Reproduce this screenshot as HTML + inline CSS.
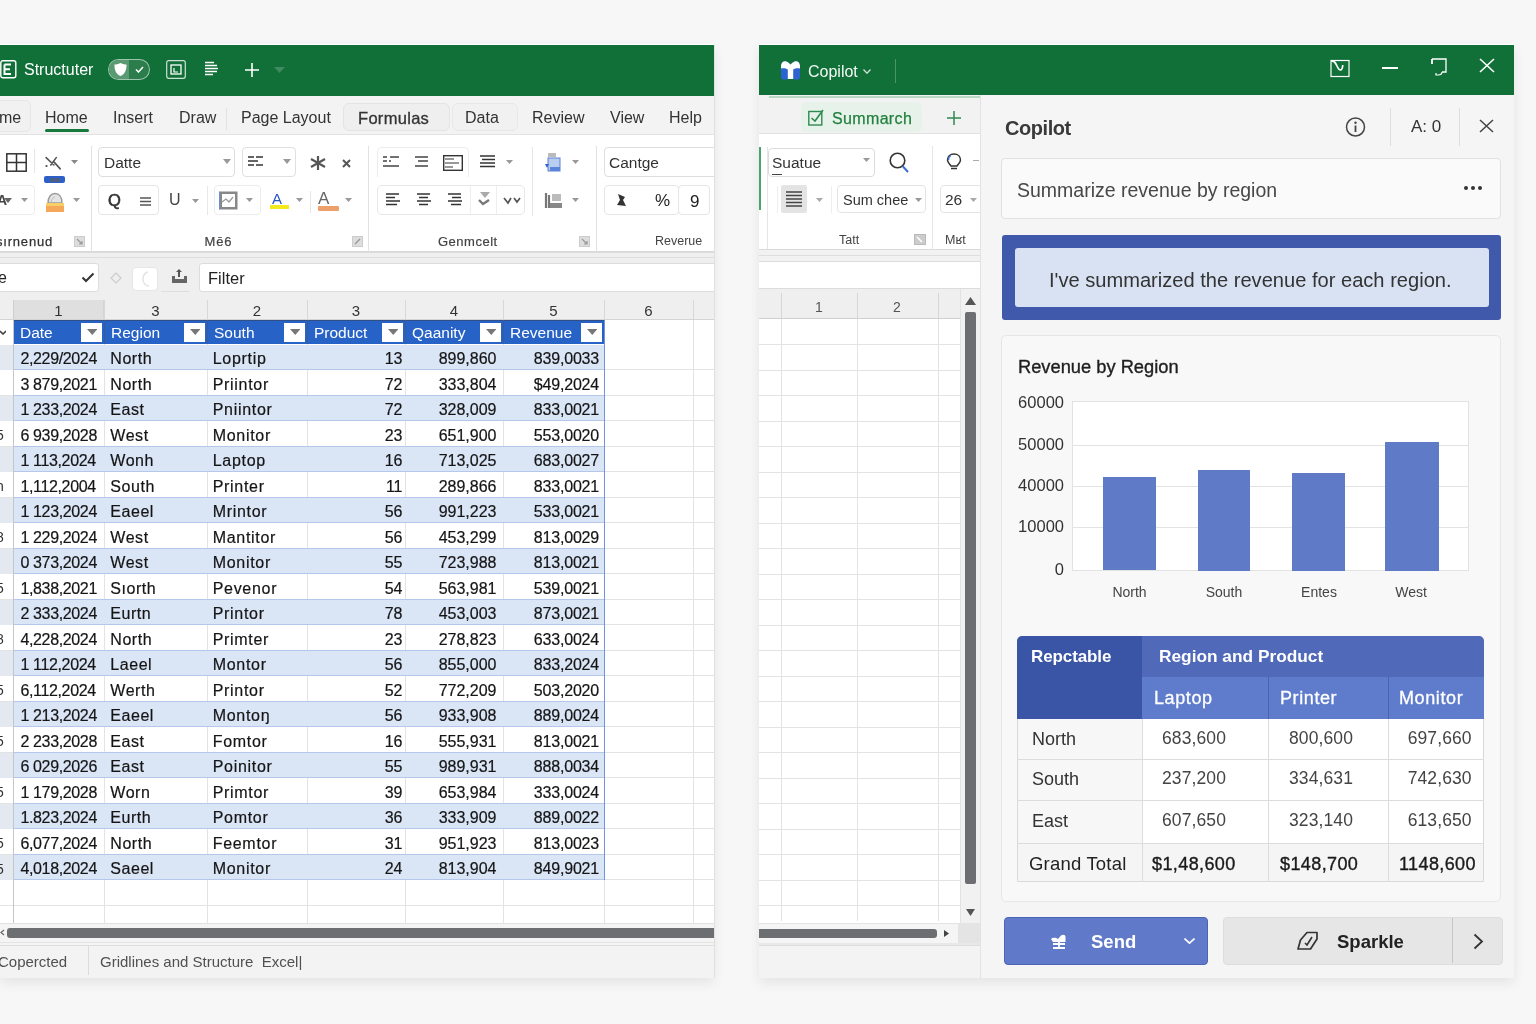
<!DOCTYPE html><html><head><meta charset="utf-8"><style>
*{box-sizing:border-box;margin:0;padding:0}
body{width:1536px;height:1024px;background:#f7f7f7;position:relative;overflow:hidden;font-family:"Liberation Sans",sans-serif;color:#222}
.a{position:absolute}
.t{position:absolute;white-space:nowrap;line-height:1}
</style></head><body><div class="a" style="left:0;top:0;width:1536px;height:1024px;will-change:transform">
<div class="a" style="left:0px;top:44px;width:714px;height:934px;background:#fff;box-shadow:0 5px 12px rgba(0,0,0,.08),1px 0 0 rgba(0,0,0,.06)"></div>
<div class="a" style="left:0;top:0;width:714px;height:1024px;overflow:hidden">
<div class="a" style="left:0px;top:45px;width:714px;height:51px;background:#116f38"></div>
<svg class="a" style="left:0px;top:60px;" width="17" height="19" viewBox="0 0 17 19"><rect x="0.8" y="0.8" width="15" height="17" rx="2" fill="none" stroke="#fff" stroke-width="1.4"/><path d="M4.5 4.5H11M4.5 4.5V14H11M4.5 9.2H10" stroke="#fff" stroke-width="2" fill="none"/></svg>
<div class="t" style="left:24px;top:62px;font-size:16px;color:#fff">Structuter</div>
<div class="a" style="left:108px;top:59px;width:42px;height:21px;border:1.3px solid rgba(255,255,255,.55);border-radius:11px;background:#2b7d4c"></div>
<div class="a" style="left:109px;top:60px;width:20px;height:19px;background:#5a9a72;border-radius:10px 0 0 10px"></div>
<svg class="a" style="left:113px;top:62px;" width="15" height="15" viewBox="0 0 15 15"><path d="M7.5 1C5 2.5 3 2.3 1.5 2.5C1.3 8 3 12 7.5 14C12 12 13.7 8 13.5 2.5C12 2.3 10 2.5 7.5 1Z" fill="#fff"/></svg>
<svg class="a" style="left:135px;top:66px;" width="9" height="7" viewBox="0 0 9 7"><path d="M1 3.5L3.5 6L8 1" fill="none" stroke="#fff" stroke-width="1.5"/></svg>
<svg class="a" style="left:166px;top:60px;" width="20" height="19" viewBox="0 0 20 19"><rect x="0.7" y="0.7" width="18.6" height="17.6" rx="2" fill="none" stroke="rgba(255,255,255,.8)" stroke-width="1.2"/><rect x="5" y="5" width="10" height="9" fill="none" stroke="#fff" stroke-width="1.3"/><path d="M8 8V12H12" fill="none" stroke="#fff" stroke-width="1.2"/></svg>
<svg class="a" style="left:204px;top:61px;" width="15" height="16" viewBox="0 0 15 16"><path d="M1 1.5H10M1 4.5H13M1 7.5H14M1 10.5H13M1 13.5H9" stroke="#fff" stroke-width="1.6"/></svg>
<svg class="a" style="left:245px;top:63px;" width="14" height="14" viewBox="0 0 14 14"><path d="M7 0V14M0 7H14" stroke="#fff" stroke-width="1.6"/></svg>
<svg class="a" style="left:274.0px;top:66.5px" width="11" height="6" viewBox="0 0 11 6"><path d="M0 0H11L5.5 6Z" fill="#3f8a5e"/></svg>
<div class="a" style="left:0px;top:96px;width:714px;height:39px;background:#f3f3f3;border-bottom:1px solid #e2e2e2"></div>
<div class="a" style="left:-10px;top:100px;width:41px;height:32px;border:1px solid #e6e6e6;border-radius:6px;background:#f1f1f1"></div>
<div class="a" style="left:343px;top:103px;width:107px;height:28px;border:1px solid #e4e4e4;border-radius:6px;background:#efefef"></div>
<div class="a" style="left:452px;top:103px;width:66px;height:28px;border:1px solid #e8e8e8;border-radius:6px;background:#f1f1f1"></div>
<div class="t" style="left:-1px;top:110px;font-size:16px;color:#333">me</div>
<div class="t" style="left:45px;top:110px;font-size:16px;color:#333">Home</div>
<div class="t" style="left:113px;top:110px;font-size:16px;color:#333">Insert</div>
<div class="t" style="left:179px;top:110px;font-size:16px;color:#333">Draw</div>
<div class="t" style="left:241px;top:110px;font-size:16px;color:#333">Page Layout</div>
<div class="t" style="left:358px;top:110px;font-size:16.5px;color:#333;-webkit-text-stroke:0.3px #333;letter-spacing:0.3px">Formulas</div>
<div class="t" style="left:465px;top:110px;font-size:16px;color:#333">Data</div>
<div class="t" style="left:532px;top:110px;font-size:16px;color:#333">Review</div>
<div class="t" style="left:610px;top:110px;font-size:16px;color:#333">View</div>
<div class="t" style="left:669px;top:110px;font-size:16px;color:#333">Help</div>
<div class="a" style="left:45px;top:129px;width:44px;height:3px;background:#177a3c;border-radius:2px"></div>
<div class="a" style="left:226px;top:108px;width:1px;height:22px;background:#e2e2e2"></div>
<div class="a" style="left:0px;top:135px;width:714px;height:117px;background:#fff;border-bottom:1px solid #d9d9d9"></div>
<div class="a" style="left:91px;top:146px;width:1px;height:106px;background:#e2e2e2"></div>
<div class="a" style="left:368px;top:146px;width:1px;height:106px;background:#e2e2e2"></div>
<div class="a" style="left:596px;top:146px;width:1px;height:106px;background:#e2e2e2"></div>
<svg class="a" style="left:6px;top:153px;" width="21" height="19" viewBox="0 0 21 19"><rect x="0.8" y="0.8" width="19.4" height="17.4" fill="none" stroke="#333" stroke-width="1.5"/><path d="M10.5 1V18M1 9.5H20" stroke="#333" stroke-width="1.5"/></svg>
<div class="a" style="left:34px;top:149px;width:1px;height:24px;background:#e6e6e6"></div>
<svg class="a" style="left:44px;top:156px;" width="18" height="15" viewBox="0 0 18 15"><path d="M2.1 1.6L9.9 9M6.8 9L12.25 1.6M9.9 5.9L16.2 12.9" fill="none" stroke="#555" stroke-width="1.6" stroke-linecap="round"/><circle cx="2.5" cy="10" r="1.1" fill="#444"/></svg>
<svg class="a" style="left:71.0px;top:160.0px" width="7" height="4" viewBox="0 0 7 4"><path d="M0 0H7L3.5 4Z" fill="#888"/></svg>
<div class="a" style="left:44px;top:176px;width:20.5px;height:7px;background:#2d5fc8;border-radius:2px"></div>
<div class="a" style="left:50px;top:177.5px;width:10px;height:4px;background:#4a5f86"></div>
<div class="a" style="left:-5px;top:185px;width:40px;height:30px;border:1px solid #ececec;border-radius:4px;background:#fff"></div>
<div class="t" style="left:-3px;top:193px;font-size:14px;color:#444;font-weight:bold">A</div>
<svg class="a" style="left:4.0px;top:197.5px" width="8" height="5" viewBox="0 0 8 5"><path d="M0 0H8L4.0 5Z" fill="#666"/></svg>
<svg class="a" style="left:21.0px;top:198.0px" width="7" height="4" viewBox="0 0 7 4"><path d="M0 0H7L3.5 4Z" fill="#999"/></svg>
<svg class="a" style="left:45px;top:192px;" width="20" height="21" viewBox="0 0 20 21"><path d="M3 11C3 5 6 1.5 10 1.5C14 1.5 17 5 17 11Z" fill="#e4e4e4" stroke="#9a9a9a" stroke-width="1.4"/><path d="M6 10C7 6.5 8.5 5 10 5" stroke="#bbb" fill="none"/><rect x="1" y="11" width="18" height="9" fill="#f5a85a"/><rect x="1" y="11" width="18" height="3" fill="#f6cf66"/></svg>
<svg class="a" style="left:73.0px;top:198.0px" width="7" height="4" viewBox="0 0 7 4"><path d="M0 0H7L3.5 4Z" fill="#999"/></svg>
<div class="a" style="left:98px;top:147px;width:137px;height:30px;border:1px solid #dedede;border-radius:4px;background:#fff"></div>
<div class="t" style="left:104px;top:155px;font-size:15.5px;color:#333">Datte</div>
<svg class="a" style="left:223.0px;top:158.5px" width="8" height="5" viewBox="0 0 8 5"><path d="M0 0H8L4.0 5Z" fill="#999"/></svg>
<div class="a" style="left:242px;top:147px;width:54px;height:30px;border:1px solid #e0e0e0;border-radius:4px;background:#fff"></div>
<svg class="a" style="left:248px;top:156px;" width="16" height="12" viewBox="0 0 16 12"><path d="M0 1H6M8 1H15M0 5H10M0 9H6M8 9H15" stroke="#333" stroke-width="1.4"/></svg>
<svg class="a" style="left:283.0px;top:158.5px" width="8" height="5" viewBox="0 0 8 5"><path d="M0 0H8L4.0 5Z" fill="#999"/></svg>
<svg class="a" style="left:309px;top:155px;" width="18" height="16" viewBox="0 0 18 16"><path d="M9 1V15M2 4L16 12M2 12L16 4" stroke="#555" stroke-width="2.2"/></svg>
<svg class="a" style="left:342px;top:159px;" width="9" height="9" viewBox="0 0 9 9"><path d="M1 1L8 8M8 1L1 8" stroke="#555" stroke-width="2"/></svg>
<div class="a" style="left:98px;top:185px;width:61px;height:30px;border:1px solid #e6e6e6;border-radius:4px;background:#fff"></div>
<div class="t" style="left:108px;top:192px;font-size:16.5px;color:#333;-webkit-text-stroke:0.6px #333">Q</div>
<svg class="a" style="left:140px;top:197px;" width="12" height="9" viewBox="0 0 12 9"><path d="M0 1H11M0 4.5H11M0 8H11" stroke="#555" stroke-width="1.3"/></svg>
<div class="t" style="left:169px;top:192px;font-size:16px;color:#444">U</div>
<svg class="a" style="left:191.5px;top:199.0px" width="7" height="4" viewBox="0 0 7 4"><path d="M0 0H7L3.5 4Z" fill="#999"/></svg>
<div class="a" style="left:207px;top:186px;width:1px;height:29px;background:#e8e8e8"></div>
<div class="a" style="left:214px;top:185px;width:47px;height:30px;border:1px solid #ececec;border-radius:4px;background:#fff"></div>
<svg class="a" style="left:219px;top:191px;" width="19" height="19" viewBox="0 0 19 19"><rect x="0.5" y="0.5" width="18" height="18" fill="#888"/><rect x="3" y="3" width="13" height="13" fill="#fff"/><path d="M3 11L7 8L10 11L14 6" stroke="#999" fill="none" stroke-width="1.3"/><path d="M0.5 0.5V18.5" stroke="#6b8fd8" stroke-width="1"/></svg>
<svg class="a" style="left:246.0px;top:198.0px" width="7" height="4" viewBox="0 0 7 4"><path d="M0 0H7L3.5 4Z" fill="#999"/></svg>
<div class="t" style="left:272px;top:191px;font-size:15px;color:#2854c8">A</div>
<div class="a" style="left:270px;top:205px;width:19px;height:4px;background:#f2ea1e"></div>
<svg class="a" style="left:296.0px;top:198.0px" width="7" height="4" viewBox="0 0 7 4"><path d="M0 0H7L3.5 4Z" fill="#999"/></svg>
<div class="a" style="left:310px;top:191px;width:1px;height:22px;background:#e6e6e6"></div>
<div class="t" style="left:318px;top:190px;font-size:17px;color:#666">A</div>
<div class="a" style="left:318px;top:206px;width:21px;height:5px;background:#eea06a;border-radius:1px"></div>
<svg class="a" style="left:345.0px;top:198.0px" width="7" height="4" viewBox="0 0 7 4"><path d="M0 0H7L3.5 4Z" fill="#999"/></svg>
<div class="a" style="left:377px;top:147px;width:92px;height:30px;border:1px solid #ececec;border-bottom:none;border-radius:5px 5px 0 0;background:#fff"></div>
<svg class="a" style="left:383px;top:156px;" width="17" height="11" viewBox="0 0 17 11"><path d="M0 1H4M7 1H16M0 5H4M6 5H8M0 10H16" stroke="#444" stroke-width="1.3"/></svg>
<svg class="a" style="left:415px;top:156px;" width="14" height="11" viewBox="0 0 14 11"><path d="M0 1H13M3 5H13M0 10H13" stroke="#444" stroke-width="1.3"/></svg>
<svg class="a" style="left:443px;top:155px;" width="20" height="16" viewBox="0 0 20 16"><rect x="0.7" y="0.7" width="18.6" height="14.6" fill="none" stroke="#333" stroke-width="1.4"/><path d="M2 4H11M2 8H16M2 12H10" stroke="#333" stroke-width="1.2"/></svg>
<svg class="a" style="left:479px;top:155px;" width="17" height="13" viewBox="0 0 17 13"><path d="M1 1H16M3 4.5H16M1 8H16M1 11.5H16" stroke="#333" stroke-width="1.6"/></svg>
<svg class="a" style="left:506.0px;top:160.0px" width="7" height="4" viewBox="0 0 7 4"><path d="M0 0H7L3.5 4Z" fill="#999"/></svg>
<div class="a" style="left:532px;top:147px;width:1px;height:69px;background:#e6e6e6"></div>
<svg class="a" style="left:544px;top:153px;" width="17" height="19" viewBox="0 0 17 19"><rect x="4" y="5" width="12" height="13" fill="#b9cdf0" stroke="#5a82d0"/><path d="M4 1H12M4 3H12" stroke="#777" stroke-width="1"/><path d="M1 11L5 11L3 15Z" fill="#2c63d8"/><rect x="6" y="14" width="10" height="4" fill="#5b85d8"/></svg>
<svg class="a" style="left:572.0px;top:160.0px" width="7" height="4" viewBox="0 0 7 4"><path d="M0 0H7L3.5 4Z" fill="#999"/></svg>
<div class="a" style="left:377px;top:185px;width:148px;height:30px;border:1px solid #e8e8e8;border-radius:5px;background:#fff"></div>
<div class="a" style="left:470px;top:186px;width:1px;height:28px;background:#eee"></div>
<div class="a" style="left:496px;top:186px;width:1px;height:28px;background:#eee"></div>
<svg class="a" style="left:385px;top:193px;" width="16" height="14" viewBox="0 0 16 14"><path d="M1 1H14M1 4.5H10M1 8H15M1 11.5H12" stroke="#333" stroke-width="1.5"/></svg>
<svg class="a" style="left:416px;top:193px;" width="16" height="14" viewBox="0 0 16 14"><path d="M1 1H14M3 4.5H12M1 8H15M3 11.5H12" stroke="#333" stroke-width="1.5"/></svg>
<svg class="a" style="left:447px;top:193px;" width="16" height="14" viewBox="0 0 16 14"><path d="M1 1H14M5 4.5H14M1 8H15M4 11.5H14" stroke="#333" stroke-width="1.5"/></svg>
<svg class="a" style="left:478px;top:191px;" width="14" height="17" viewBox="0 0 14 17"><path d="M2 1H12L7 7Z" fill="#aaa"/><path d="M1 9L5 13L11 9" fill="none" stroke="#777" stroke-width="2.4"/></svg>
<svg class="a" style="left:503px;top:196px;" width="18" height="9" viewBox="0 0 18 9"><path d="M1 2L5 7L8 2M11 2L14 6L17 2" fill="none" stroke="#555" stroke-width="1.7"/></svg>
<svg class="a" style="left:544px;top:192px;" width="19" height="17" viewBox="0 0 19 17"><path d="M2 1V16M5 3V16" stroke="#777" stroke-width="2.2"/><rect x="8" y="2" width="9" height="7" fill="#bbb"/><rect x="6" y="11" width="12" height="5" fill="#888"/></svg>
<svg class="a" style="left:572.0px;top:198.0px" width="7" height="4" viewBox="0 0 7 4"><path d="M0 0H7L3.5 4Z" fill="#999"/></svg>
<div class="a" style="left:604px;top:147px;width:115px;height:30px;border:1px solid #dedede;border-radius:4px;background:#fff"></div>
<div class="t" style="left:609px;top:155px;font-size:15.5px;color:#333">Cantge</div>
<div class="a" style="left:604px;top:185px;width:75px;height:30px;border:1px solid #e6e6e6;border-radius:4px;background:#fff"></div>
<div class="a" style="left:678px;top:185px;width:32px;height:30px;border:1px solid #e6e6e6;border-radius:4px;background:#fff"></div>
<svg class="a" style="left:615px;top:193px;" width="13" height="14" viewBox="0 0 13 14"><path d="M3 1L10 4L8 7L11 13L2 12L5 7Z" fill="#333"/></svg>
<div class="t" style="left:655px;top:192px;font-size:17px;color:#222">%</div>
<div class="t" style="left:690px;top:192.5px;font-size:17px;color:#222">9</div>
<div class="t" style="left:-4px;top:235px;font-size:13px;color:#333;letter-spacing:0.8px;-webkit-text-stroke:0.25px #333">sırnenud</div>
<svg class="a" style="left:74px;top:236px;" width="11" height="11" viewBox="0 0 11 11"><rect x="0.5" y="0.5" width="10" height="10" fill="#ddd" stroke="#ccc"/><path d="M3 3L8 8M8 5V8H5" stroke="#999" stroke-width="1.2" fill="none"/></svg>
<div class="t" style="left:204.5px;top:235px;font-size:13px;color:#444;letter-spacing:0.8px;-webkit-text-stroke:0.2px #444">Mē6</div>
<svg class="a" style="left:352px;top:236px;" width="11" height="11" viewBox="0 0 11 11"><rect x="0.5" y="0.5" width="10" height="10" fill="#ddd" stroke="#ccc"/><path d="M3 8L8 3" stroke="#999" stroke-width="1.5"/></svg>
<div class="t" style="left:438px;top:235px;font-size:13px;color:#444;letter-spacing:0.5px;-webkit-text-stroke:0.2px #444">Genmcelt</div>
<svg class="a" style="left:579px;top:236px;" width="11" height="11" viewBox="0 0 11 11"><rect x="0.5" y="0.5" width="10" height="10" fill="#ddd" stroke="#ccc"/><path d="M3 3L8 8M8 5V8H5" stroke="#999" stroke-width="1.2" fill="none"/></svg>
<div class="t" style="left:655px;top:235px;font-size:12.5px;color:#444">Reverue</div>
<div class="a" style="left:0px;top:252px;width:714px;height:46px;background:#efefef;border-top:1px solid #dcdcdc"></div>
<div class="a" style="left:0px;top:257px;width:714px;height:1px;background:#dedede"></div>
<div class="a" style="left:-4px;top:263px;width:103px;height:29px;background:#fff;border:1px solid #dcdcdc;border-radius:3px"></div>
<div class="t" style="left:-2px;top:270px;font-size:16px;color:#222">e</div>
<svg class="a" style="left:81px;top:272px;" width="14" height="11" viewBox="0 0 14 11"><path d="M1.5 5.5L5 9L12.5 1.5" fill="none" stroke="#333" stroke-width="2"/></svg>
<svg class="a" style="left:110px;top:272px;" width="12" height="12" viewBox="0 0 12 12"><path d="M6 1L11 6L6 11L1 6Z" fill="none" stroke="#ccc" stroke-width="1.2"/></svg>
<div class="a" style="left:132px;top:267px;width:26px;height:24px;background:#fff;border:1px solid #e6e6e6;border-radius:4px"></div>
<svg class="a" style="left:139px;top:271px;" width="12" height="16" viewBox="0 0 12 16"><path d="M9 1C4 2 3 8 5 12C6 14 8 15 10 15" fill="none" stroke="#e4e4e4" stroke-width="1.5"/></svg>
<svg class="a" style="left:171px;top:268px;" width="17" height="16" viewBox="0 0 17 16"><path d="M8 1L11 4H9V9H7V4H5Z" fill="#555"/><path d="M1 8H4V11H13V8H16V15H1Z" fill="#666"/></svg>
<div class="a" style="left:161px;top:291px;width:28px;height:1px;background:#dedede"></div>
<div class="a" style="left:199px;top:263px;width:520px;height:29px;background:#fff;border:1px solid #dcdcdc;border-radius:3px"></div>
<div class="t" style="left:208px;top:270px;font-size:16.5px;color:#222">Filter</div>
<div class="a" style="left:0px;top:298px;width:714px;height:22px;background:#efefef"></div>
<div class="a" style="left:13px;top:300px;width:91px;height:20px;background:#dfdfdf;border-left:1px solid #cfcfcf;border-right:1px solid #d4d4d4"></div>
<div class="a" style="left:104px;top:300px;width:1px;height:20px;background:#d8d8d8"></div>
<div class="t" style="left:13px;width:91px;text-align:center;top:303px;font-size:15px;color:#333">1</div>
<div class="a" style="left:207px;top:300px;width:1px;height:20px;background:#d8d8d8"></div>
<div class="t" style="left:104px;width:103px;text-align:center;top:303px;font-size:15px;color:#333">3</div>
<div class="a" style="left:307px;top:300px;width:1px;height:20px;background:#d8d8d8"></div>
<div class="t" style="left:207px;width:100px;text-align:center;top:303px;font-size:15px;color:#333">2</div>
<div class="a" style="left:405px;top:300px;width:1px;height:20px;background:#d8d8d8"></div>
<div class="t" style="left:307px;width:98px;text-align:center;top:303px;font-size:15px;color:#333">3</div>
<div class="a" style="left:503px;top:300px;width:1px;height:20px;background:#d8d8d8"></div>
<div class="t" style="left:405px;width:98px;text-align:center;top:303px;font-size:15px;color:#333">4</div>
<div class="a" style="left:604px;top:300px;width:1px;height:20px;background:#d8d8d8"></div>
<div class="t" style="left:503px;width:101px;text-align:center;top:303px;font-size:15px;color:#333">5</div>
<div class="a" style="left:693px;top:300px;width:1px;height:20px;background:#d8d8d8"></div>
<div class="t" style="left:604px;width:89px;text-align:center;top:303px;font-size:15px;color:#333">6</div>
<div class="a" style="left:714px;top:300px;width:1px;height:20px;background:#d8d8d8"></div>
<div class="t" style="left:693px;width:21px;text-align:center;top:303px;font-size:15px;color:#333"></div>
<div class="a" style="left:0px;top:319px;width:714px;height:1px;background:#d4d4d4"></div>
<div class="a" style="left:0px;top:320px;width:714px;height:603px;background:#fff"></div>
<div class="a" style="left:0px;top:369.0px;width:714px;height:1px;background:#e3e3e3"></div>
<div class="a" style="left:0px;top:394.5px;width:714px;height:1px;background:#e3e3e3"></div>
<div class="a" style="left:0px;top:420.0px;width:714px;height:1px;background:#e3e3e3"></div>
<div class="a" style="left:0px;top:445.5px;width:714px;height:1px;background:#e3e3e3"></div>
<div class="a" style="left:0px;top:471.0px;width:714px;height:1px;background:#e3e3e3"></div>
<div class="a" style="left:0px;top:496.5px;width:714px;height:1px;background:#e3e3e3"></div>
<div class="a" style="left:0px;top:522.0px;width:714px;height:1px;background:#e3e3e3"></div>
<div class="a" style="left:0px;top:547.5px;width:714px;height:1px;background:#e3e3e3"></div>
<div class="a" style="left:0px;top:573.0px;width:714px;height:1px;background:#e3e3e3"></div>
<div class="a" style="left:0px;top:598.5px;width:714px;height:1px;background:#e3e3e3"></div>
<div class="a" style="left:0px;top:624.0px;width:714px;height:1px;background:#e3e3e3"></div>
<div class="a" style="left:0px;top:649.5px;width:714px;height:1px;background:#e3e3e3"></div>
<div class="a" style="left:0px;top:675.0px;width:714px;height:1px;background:#e3e3e3"></div>
<div class="a" style="left:0px;top:700.5px;width:714px;height:1px;background:#e3e3e3"></div>
<div class="a" style="left:0px;top:726.0px;width:714px;height:1px;background:#e3e3e3"></div>
<div class="a" style="left:0px;top:751.5px;width:714px;height:1px;background:#e3e3e3"></div>
<div class="a" style="left:0px;top:777.0px;width:714px;height:1px;background:#e3e3e3"></div>
<div class="a" style="left:0px;top:802.5px;width:714px;height:1px;background:#e3e3e3"></div>
<div class="a" style="left:0px;top:828.0px;width:714px;height:1px;background:#e3e3e3"></div>
<div class="a" style="left:0px;top:853.5px;width:714px;height:1px;background:#e3e3e3"></div>
<div class="a" style="left:0px;top:879.0px;width:714px;height:1px;background:#e3e3e3"></div>
<div class="a" style="left:0px;top:904.5px;width:714px;height:1px;background:#e3e3e3"></div>
<div class="a" style="left:0px;top:930.0px;width:714px;height:1px;background:#e3e3e3"></div>
<div class="a" style="left:104px;top:320px;width:1px;height:603px;background:#e3e3e3"></div>
<div class="a" style="left:207px;top:320px;width:1px;height:603px;background:#e3e3e3"></div>
<div class="a" style="left:307px;top:320px;width:1px;height:603px;background:#e3e3e3"></div>
<div class="a" style="left:405px;top:320px;width:1px;height:603px;background:#e3e3e3"></div>
<div class="a" style="left:503px;top:320px;width:1px;height:603px;background:#e3e3e3"></div>
<div class="a" style="left:604px;top:320px;width:1px;height:603px;background:#e3e3e3"></div>
<div class="a" style="left:693px;top:320px;width:1px;height:603px;background:#e3e3e3"></div>
<div class="a" style="left:13px;top:320px;width:591px;height:24px;background:#2762c6;border-top:1px solid #2f4f86"></div>
<div class="t" style="left:20px;top:325px;font-size:15.5px;color:#fff">Date</div>
<div class="a" style="left:81px;top:323px;width:21px;height:19px;background:#fff"></div>
<svg class="a" style="left:86.75px;top:329.0px" width="10.5" height="6" viewBox="0 0 10.5 6"><path d="M0 0H10.5L5.25 6Z" fill="#777"/></svg>
<div class="a" style="left:104px;top:320px;width:1px;height:24px;background:#3b5a94"></div>
<div class="t" style="left:111px;top:325px;font-size:15.5px;color:#fff">Region</div>
<div class="a" style="left:184px;top:323px;width:21px;height:19px;background:#fff"></div>
<svg class="a" style="left:189.75px;top:329.0px" width="10.5" height="6" viewBox="0 0 10.5 6"><path d="M0 0H10.5L5.25 6Z" fill="#777"/></svg>
<div class="a" style="left:207px;top:320px;width:1px;height:24px;background:#3b5a94"></div>
<div class="t" style="left:214px;top:325px;font-size:15.5px;color:#fff">South</div>
<div class="a" style="left:284px;top:323px;width:21px;height:19px;background:#fff"></div>
<svg class="a" style="left:289.75px;top:329.0px" width="10.5" height="6" viewBox="0 0 10.5 6"><path d="M0 0H10.5L5.25 6Z" fill="#777"/></svg>
<div class="a" style="left:307px;top:320px;width:1px;height:24px;background:#3b5a94"></div>
<div class="t" style="left:314px;top:325px;font-size:15.5px;color:#fff">Product</div>
<div class="a" style="left:382px;top:323px;width:21px;height:19px;background:#fff"></div>
<svg class="a" style="left:387.75px;top:329.0px" width="10.5" height="6" viewBox="0 0 10.5 6"><path d="M0 0H10.5L5.25 6Z" fill="#777"/></svg>
<div class="a" style="left:405px;top:320px;width:1px;height:24px;background:#3b5a94"></div>
<div class="t" style="left:412px;top:325px;font-size:15.5px;color:#fff">Qaanity</div>
<div class="a" style="left:480px;top:323px;width:21px;height:19px;background:#fff"></div>
<svg class="a" style="left:485.75px;top:329.0px" width="10.5" height="6" viewBox="0 0 10.5 6"><path d="M0 0H10.5L5.25 6Z" fill="#777"/></svg>
<div class="a" style="left:503px;top:320px;width:1px;height:24px;background:#3b5a94"></div>
<div class="t" style="left:510px;top:325px;font-size:15.5px;color:#fff">Revenue</div>
<div class="a" style="left:581px;top:323px;width:21px;height:19px;background:#fff"></div>
<svg class="a" style="left:586.75px;top:329.0px" width="10.5" height="6" viewBox="0 0 10.5 6"><path d="M0 0H10.5L5.25 6Z" fill="#777"/></svg>
<div class="a" style="left:0px;top:344.5px;width:13px;height:25.5px;background:#e4e8f0"></div>
<div class="a" style="left:13px;top:344.5px;width:591px;height:25.5px;background:#dae5f6"></div>
<div class="a" style="left:13px;top:369.4px;width:591px;height:1px;background:#b5c8ec"></div>
<div class="t" style="left:20.4px;top:351.0px;font-size:16px;color:#151515;-webkit-text-stroke:0.2px #151515;letter-spacing:-0.35px">2,229/2024</div>
<div class="t" style="left:110.3px;top:351.0px;font-size:16px;color:#151515;-webkit-text-stroke:0.2px #151515;letter-spacing:0.55px">North</div>
<div class="t" style="left:212.7px;top:351.0px;font-size:16px;color:#151515;-webkit-text-stroke:0.2px #151515;letter-spacing:0.7px">Loprtip</div>
<div class="t" style="left:307px;width:95.5px;text-align:right;top:351.0px;font-size:16px;color:#151515;-webkit-text-stroke:0.2px #151515;">13</div>
<div class="t" style="left:405px;width:91.5px;text-align:right;top:351.0px;font-size:16px;color:#151515;-webkit-text-stroke:0.2px #151515;">899,860</div>
<div class="t" style="left:503px;width:96px;text-align:right;top:351.0px;font-size:16px;letter-spacing:-0.2px;color:#151515;-webkit-text-stroke:0.2px #151515;">839,0033</div>
<div class="a" style="left:13px;top:394.9px;width:591px;height:1px;background:#b5c8ec"></div>
<div class="t" style="left:20.4px;top:376.5px;font-size:16px;color:#151515;-webkit-text-stroke:0.2px #151515;letter-spacing:-0.35px">3 879,2021</div>
<div class="t" style="left:110.3px;top:376.5px;font-size:16px;color:#151515;-webkit-text-stroke:0.2px #151515;letter-spacing:0.55px">North</div>
<div class="t" style="left:212.7px;top:376.5px;font-size:16px;color:#151515;-webkit-text-stroke:0.2px #151515;letter-spacing:0.7px">Priintor</div>
<div class="t" style="left:307px;width:95.5px;text-align:right;top:376.5px;font-size:16px;color:#151515;-webkit-text-stroke:0.2px #151515;">72</div>
<div class="t" style="left:405px;width:91.5px;text-align:right;top:376.5px;font-size:16px;color:#151515;-webkit-text-stroke:0.2px #151515;">333,804</div>
<div class="t" style="left:503px;width:96px;text-align:right;top:376.5px;font-size:16px;letter-spacing:-0.2px;color:#151515;-webkit-text-stroke:0.2px #151515;">$49,2024</div>
<div class="a" style="left:0px;top:395.5px;width:13px;height:25.5px;background:#e4e8f0"></div>
<div class="a" style="left:13px;top:395.5px;width:591px;height:25.5px;background:#dae5f6"></div>
<div class="a" style="left:13px;top:420.4px;width:591px;height:1px;background:#b5c8ec"></div>
<div class="t" style="left:20.4px;top:402.0px;font-size:16px;color:#151515;-webkit-text-stroke:0.2px #151515;letter-spacing:-0.35px">1 233,2024</div>
<div class="t" style="left:110.3px;top:402.0px;font-size:16px;color:#151515;-webkit-text-stroke:0.2px #151515;letter-spacing:0.55px">East</div>
<div class="t" style="left:212.7px;top:402.0px;font-size:16px;color:#151515;-webkit-text-stroke:0.2px #151515;letter-spacing:0.7px">Pniintor</div>
<div class="t" style="left:307px;width:95.5px;text-align:right;top:402.0px;font-size:16px;color:#151515;-webkit-text-stroke:0.2px #151515;">72</div>
<div class="t" style="left:405px;width:91.5px;text-align:right;top:402.0px;font-size:16px;color:#151515;-webkit-text-stroke:0.2px #151515;">328,009</div>
<div class="t" style="left:503px;width:96px;text-align:right;top:402.0px;font-size:16px;letter-spacing:-0.2px;color:#151515;-webkit-text-stroke:0.2px #151515;">833,0021</div>
<div class="a" style="left:13px;top:445.9px;width:591px;height:1px;background:#b5c8ec"></div>
<div class="t" style="left:20.4px;top:427.5px;font-size:16px;color:#151515;-webkit-text-stroke:0.2px #151515;letter-spacing:-0.35px">6 939,2028</div>
<div class="t" style="left:110.3px;top:427.5px;font-size:16px;color:#151515;-webkit-text-stroke:0.2px #151515;letter-spacing:0.55px">West</div>
<div class="t" style="left:212.7px;top:427.5px;font-size:16px;color:#151515;-webkit-text-stroke:0.2px #151515;letter-spacing:0.7px">Monitor</div>
<div class="t" style="left:307px;width:95.5px;text-align:right;top:427.5px;font-size:16px;color:#151515;-webkit-text-stroke:0.2px #151515;">23</div>
<div class="t" style="left:405px;width:91.5px;text-align:right;top:427.5px;font-size:16px;color:#151515;-webkit-text-stroke:0.2px #151515;">651,900</div>
<div class="t" style="left:503px;width:96px;text-align:right;top:427.5px;font-size:16px;letter-spacing:-0.2px;color:#151515;-webkit-text-stroke:0.2px #151515;">553,0020</div>
<div class="a" style="left:0px;top:446.5px;width:13px;height:25.5px;background:#e4e8f0"></div>
<div class="a" style="left:13px;top:446.5px;width:591px;height:25.5px;background:#dae5f6"></div>
<div class="a" style="left:13px;top:471.4px;width:591px;height:1px;background:#b5c8ec"></div>
<div class="t" style="left:20.4px;top:453.0px;font-size:16px;color:#151515;-webkit-text-stroke:0.2px #151515;letter-spacing:-0.35px">1 113,2024</div>
<div class="t" style="left:110.3px;top:453.0px;font-size:16px;color:#151515;-webkit-text-stroke:0.2px #151515;letter-spacing:0.55px">Wonh</div>
<div class="t" style="left:212.7px;top:453.0px;font-size:16px;color:#151515;-webkit-text-stroke:0.2px #151515;letter-spacing:0.7px">Laptop</div>
<div class="t" style="left:307px;width:95.5px;text-align:right;top:453.0px;font-size:16px;color:#151515;-webkit-text-stroke:0.2px #151515;">16</div>
<div class="t" style="left:405px;width:91.5px;text-align:right;top:453.0px;font-size:16px;color:#151515;-webkit-text-stroke:0.2px #151515;">713,025</div>
<div class="t" style="left:503px;width:96px;text-align:right;top:453.0px;font-size:16px;letter-spacing:-0.2px;color:#151515;-webkit-text-stroke:0.2px #151515;">683,0027</div>
<div class="a" style="left:13px;top:496.9px;width:591px;height:1px;background:#b5c8ec"></div>
<div class="t" style="left:20.4px;top:478.5px;font-size:16px;color:#151515;-webkit-text-stroke:0.2px #151515;letter-spacing:-0.35px">1,112,2004</div>
<div class="t" style="left:110.3px;top:478.5px;font-size:16px;color:#151515;-webkit-text-stroke:0.2px #151515;letter-spacing:0.55px">South</div>
<div class="t" style="left:212.7px;top:478.5px;font-size:16px;color:#151515;-webkit-text-stroke:0.2px #151515;letter-spacing:0.7px">Printer</div>
<div class="t" style="left:307px;width:95.5px;text-align:right;top:478.5px;font-size:16px;color:#151515;-webkit-text-stroke:0.2px #151515;">11</div>
<div class="t" style="left:405px;width:91.5px;text-align:right;top:478.5px;font-size:16px;color:#151515;-webkit-text-stroke:0.2px #151515;">289,866</div>
<div class="t" style="left:503px;width:96px;text-align:right;top:478.5px;font-size:16px;letter-spacing:-0.2px;color:#151515;-webkit-text-stroke:0.2px #151515;">833,0021</div>
<div class="a" style="left:0px;top:497.5px;width:13px;height:25.5px;background:#e4e8f0"></div>
<div class="a" style="left:13px;top:497.5px;width:591px;height:25.5px;background:#dae5f6"></div>
<div class="a" style="left:13px;top:522.4px;width:591px;height:1px;background:#b5c8ec"></div>
<div class="t" style="left:20.4px;top:504.0px;font-size:16px;color:#151515;-webkit-text-stroke:0.2px #151515;letter-spacing:-0.35px">1 123,2024</div>
<div class="t" style="left:110.3px;top:504.0px;font-size:16px;color:#151515;-webkit-text-stroke:0.2px #151515;letter-spacing:0.55px">Eaeel</div>
<div class="t" style="left:212.7px;top:504.0px;font-size:16px;color:#151515;-webkit-text-stroke:0.2px #151515;letter-spacing:0.7px">Mrintor</div>
<div class="t" style="left:307px;width:95.5px;text-align:right;top:504.0px;font-size:16px;color:#151515;-webkit-text-stroke:0.2px #151515;">56</div>
<div class="t" style="left:405px;width:91.5px;text-align:right;top:504.0px;font-size:16px;color:#151515;-webkit-text-stroke:0.2px #151515;">991,223</div>
<div class="t" style="left:503px;width:96px;text-align:right;top:504.0px;font-size:16px;letter-spacing:-0.2px;color:#151515;-webkit-text-stroke:0.2px #151515;">533,0021</div>
<div class="a" style="left:13px;top:547.9px;width:591px;height:1px;background:#b5c8ec"></div>
<div class="t" style="left:20.4px;top:529.5px;font-size:16px;color:#151515;-webkit-text-stroke:0.2px #151515;letter-spacing:-0.35px">1 229,2024</div>
<div class="t" style="left:110.3px;top:529.5px;font-size:16px;color:#151515;-webkit-text-stroke:0.2px #151515;letter-spacing:0.55px">West</div>
<div class="t" style="left:212.7px;top:529.5px;font-size:16px;color:#151515;-webkit-text-stroke:0.2px #151515;letter-spacing:0.7px">Mantitor</div>
<div class="t" style="left:307px;width:95.5px;text-align:right;top:529.5px;font-size:16px;color:#151515;-webkit-text-stroke:0.2px #151515;">56</div>
<div class="t" style="left:405px;width:91.5px;text-align:right;top:529.5px;font-size:16px;color:#151515;-webkit-text-stroke:0.2px #151515;">453,299</div>
<div class="t" style="left:503px;width:96px;text-align:right;top:529.5px;font-size:16px;letter-spacing:-0.2px;color:#151515;-webkit-text-stroke:0.2px #151515;">813,0029</div>
<div class="a" style="left:0px;top:548.5px;width:13px;height:25.5px;background:#e4e8f0"></div>
<div class="a" style="left:13px;top:548.5px;width:591px;height:25.5px;background:#dae5f6"></div>
<div class="a" style="left:13px;top:573.4px;width:591px;height:1px;background:#b5c8ec"></div>
<div class="t" style="left:20.4px;top:555.0px;font-size:16px;color:#151515;-webkit-text-stroke:0.2px #151515;letter-spacing:-0.35px">0 373,2024</div>
<div class="t" style="left:110.3px;top:555.0px;font-size:16px;color:#151515;-webkit-text-stroke:0.2px #151515;letter-spacing:0.55px">West</div>
<div class="t" style="left:212.7px;top:555.0px;font-size:16px;color:#151515;-webkit-text-stroke:0.2px #151515;letter-spacing:0.7px">Monitor</div>
<div class="t" style="left:307px;width:95.5px;text-align:right;top:555.0px;font-size:16px;color:#151515;-webkit-text-stroke:0.2px #151515;">55</div>
<div class="t" style="left:405px;width:91.5px;text-align:right;top:555.0px;font-size:16px;color:#151515;-webkit-text-stroke:0.2px #151515;">723,988</div>
<div class="t" style="left:503px;width:96px;text-align:right;top:555.0px;font-size:16px;letter-spacing:-0.2px;color:#151515;-webkit-text-stroke:0.2px #151515;">813,0021</div>
<div class="a" style="left:13px;top:598.9px;width:591px;height:1px;background:#b5c8ec"></div>
<div class="t" style="left:20.4px;top:580.5px;font-size:16px;color:#151515;-webkit-text-stroke:0.2px #151515;letter-spacing:-0.35px">1,838,2021</div>
<div class="t" style="left:110.3px;top:580.5px;font-size:16px;color:#151515;-webkit-text-stroke:0.2px #151515;letter-spacing:0.55px">Sıorth</div>
<div class="t" style="left:212.7px;top:580.5px;font-size:16px;color:#151515;-webkit-text-stroke:0.2px #151515;letter-spacing:0.7px">Pevenor</div>
<div class="t" style="left:307px;width:95.5px;text-align:right;top:580.5px;font-size:16px;color:#151515;-webkit-text-stroke:0.2px #151515;">54</div>
<div class="t" style="left:405px;width:91.5px;text-align:right;top:580.5px;font-size:16px;color:#151515;-webkit-text-stroke:0.2px #151515;">563,981</div>
<div class="t" style="left:503px;width:96px;text-align:right;top:580.5px;font-size:16px;letter-spacing:-0.2px;color:#151515;-webkit-text-stroke:0.2px #151515;">539,0021</div>
<div class="a" style="left:0px;top:599.5px;width:13px;height:25.5px;background:#e4e8f0"></div>
<div class="a" style="left:13px;top:599.5px;width:591px;height:25.5px;background:#dae5f6"></div>
<div class="a" style="left:13px;top:624.4px;width:591px;height:1px;background:#b5c8ec"></div>
<div class="t" style="left:20.4px;top:606.0px;font-size:16px;color:#151515;-webkit-text-stroke:0.2px #151515;letter-spacing:-0.35px">2 333,2024</div>
<div class="t" style="left:110.3px;top:606.0px;font-size:16px;color:#151515;-webkit-text-stroke:0.2px #151515;letter-spacing:0.55px">Eurtn</div>
<div class="t" style="left:212.7px;top:606.0px;font-size:16px;color:#151515;-webkit-text-stroke:0.2px #151515;letter-spacing:0.7px">Printor</div>
<div class="t" style="left:307px;width:95.5px;text-align:right;top:606.0px;font-size:16px;color:#151515;-webkit-text-stroke:0.2px #151515;">78</div>
<div class="t" style="left:405px;width:91.5px;text-align:right;top:606.0px;font-size:16px;color:#151515;-webkit-text-stroke:0.2px #151515;">453,003</div>
<div class="t" style="left:503px;width:96px;text-align:right;top:606.0px;font-size:16px;letter-spacing:-0.2px;color:#151515;-webkit-text-stroke:0.2px #151515;">873,0021</div>
<div class="a" style="left:13px;top:649.9px;width:591px;height:1px;background:#b5c8ec"></div>
<div class="t" style="left:20.4px;top:631.5px;font-size:16px;color:#151515;-webkit-text-stroke:0.2px #151515;letter-spacing:-0.35px">4,228,2024</div>
<div class="t" style="left:110.3px;top:631.5px;font-size:16px;color:#151515;-webkit-text-stroke:0.2px #151515;letter-spacing:0.55px">North</div>
<div class="t" style="left:212.7px;top:631.5px;font-size:16px;color:#151515;-webkit-text-stroke:0.2px #151515;letter-spacing:0.7px">Primter</div>
<div class="t" style="left:307px;width:95.5px;text-align:right;top:631.5px;font-size:16px;color:#151515;-webkit-text-stroke:0.2px #151515;">23</div>
<div class="t" style="left:405px;width:91.5px;text-align:right;top:631.5px;font-size:16px;color:#151515;-webkit-text-stroke:0.2px #151515;">278,823</div>
<div class="t" style="left:503px;width:96px;text-align:right;top:631.5px;font-size:16px;letter-spacing:-0.2px;color:#151515;-webkit-text-stroke:0.2px #151515;">633,0024</div>
<div class="a" style="left:0px;top:650.5px;width:13px;height:25.5px;background:#e4e8f0"></div>
<div class="a" style="left:13px;top:650.5px;width:591px;height:25.5px;background:#dae5f6"></div>
<div class="a" style="left:13px;top:675.4px;width:591px;height:1px;background:#b5c8ec"></div>
<div class="t" style="left:20.4px;top:657.0px;font-size:16px;color:#151515;-webkit-text-stroke:0.2px #151515;letter-spacing:-0.35px">1 112,2024</div>
<div class="t" style="left:110.3px;top:657.0px;font-size:16px;color:#151515;-webkit-text-stroke:0.2px #151515;letter-spacing:0.55px">Laeel</div>
<div class="t" style="left:212.7px;top:657.0px;font-size:16px;color:#151515;-webkit-text-stroke:0.2px #151515;letter-spacing:0.7px">Montor</div>
<div class="t" style="left:307px;width:95.5px;text-align:right;top:657.0px;font-size:16px;color:#151515;-webkit-text-stroke:0.2px #151515;">56</div>
<div class="t" style="left:405px;width:91.5px;text-align:right;top:657.0px;font-size:16px;color:#151515;-webkit-text-stroke:0.2px #151515;">855,000</div>
<div class="t" style="left:503px;width:96px;text-align:right;top:657.0px;font-size:16px;letter-spacing:-0.2px;color:#151515;-webkit-text-stroke:0.2px #151515;">833,2024</div>
<div class="a" style="left:13px;top:700.9px;width:591px;height:1px;background:#b5c8ec"></div>
<div class="t" style="left:20.4px;top:682.5px;font-size:16px;color:#151515;-webkit-text-stroke:0.2px #151515;letter-spacing:-0.35px">6,112,2024</div>
<div class="t" style="left:110.3px;top:682.5px;font-size:16px;color:#151515;-webkit-text-stroke:0.2px #151515;letter-spacing:0.55px">Werth</div>
<div class="t" style="left:212.7px;top:682.5px;font-size:16px;color:#151515;-webkit-text-stroke:0.2px #151515;letter-spacing:0.7px">Printor</div>
<div class="t" style="left:307px;width:95.5px;text-align:right;top:682.5px;font-size:16px;color:#151515;-webkit-text-stroke:0.2px #151515;">52</div>
<div class="t" style="left:405px;width:91.5px;text-align:right;top:682.5px;font-size:16px;color:#151515;-webkit-text-stroke:0.2px #151515;">772,209</div>
<div class="t" style="left:503px;width:96px;text-align:right;top:682.5px;font-size:16px;letter-spacing:-0.2px;color:#151515;-webkit-text-stroke:0.2px #151515;">503,2020</div>
<div class="a" style="left:0px;top:701.5px;width:13px;height:25.5px;background:#e4e8f0"></div>
<div class="a" style="left:13px;top:701.5px;width:591px;height:25.5px;background:#dae5f6"></div>
<div class="a" style="left:13px;top:726.4px;width:591px;height:1px;background:#b5c8ec"></div>
<div class="t" style="left:20.4px;top:708.0px;font-size:16px;color:#151515;-webkit-text-stroke:0.2px #151515;letter-spacing:-0.35px">1 213,2024</div>
<div class="t" style="left:110.3px;top:708.0px;font-size:16px;color:#151515;-webkit-text-stroke:0.2px #151515;letter-spacing:0.55px">Eaeel</div>
<div class="t" style="left:212.7px;top:708.0px;font-size:16px;color:#151515;-webkit-text-stroke:0.2px #151515;letter-spacing:0.7px">Montoŋ</div>
<div class="t" style="left:307px;width:95.5px;text-align:right;top:708.0px;font-size:16px;color:#151515;-webkit-text-stroke:0.2px #151515;">56</div>
<div class="t" style="left:405px;width:91.5px;text-align:right;top:708.0px;font-size:16px;color:#151515;-webkit-text-stroke:0.2px #151515;">933,908</div>
<div class="t" style="left:503px;width:96px;text-align:right;top:708.0px;font-size:16px;letter-spacing:-0.2px;color:#151515;-webkit-text-stroke:0.2px #151515;">889,0024</div>
<div class="a" style="left:13px;top:751.9px;width:591px;height:1px;background:#b5c8ec"></div>
<div class="t" style="left:20.4px;top:733.5px;font-size:16px;color:#151515;-webkit-text-stroke:0.2px #151515;letter-spacing:-0.35px">2 233,2028</div>
<div class="t" style="left:110.3px;top:733.5px;font-size:16px;color:#151515;-webkit-text-stroke:0.2px #151515;letter-spacing:0.55px">East</div>
<div class="t" style="left:212.7px;top:733.5px;font-size:16px;color:#151515;-webkit-text-stroke:0.2px #151515;letter-spacing:0.7px">Fomtor</div>
<div class="t" style="left:307px;width:95.5px;text-align:right;top:733.5px;font-size:16px;color:#151515;-webkit-text-stroke:0.2px #151515;">16</div>
<div class="t" style="left:405px;width:91.5px;text-align:right;top:733.5px;font-size:16px;color:#151515;-webkit-text-stroke:0.2px #151515;">555,931</div>
<div class="t" style="left:503px;width:96px;text-align:right;top:733.5px;font-size:16px;letter-spacing:-0.2px;color:#151515;-webkit-text-stroke:0.2px #151515;">813,0021</div>
<div class="a" style="left:0px;top:752.5px;width:13px;height:25.5px;background:#e4e8f0"></div>
<div class="a" style="left:13px;top:752.5px;width:591px;height:25.5px;background:#dae5f6"></div>
<div class="a" style="left:13px;top:777.4px;width:591px;height:1px;background:#b5c8ec"></div>
<div class="t" style="left:20.4px;top:759.0px;font-size:16px;color:#151515;-webkit-text-stroke:0.2px #151515;letter-spacing:-0.35px">6 029,2026</div>
<div class="t" style="left:110.3px;top:759.0px;font-size:16px;color:#151515;-webkit-text-stroke:0.2px #151515;letter-spacing:0.55px">East</div>
<div class="t" style="left:212.7px;top:759.0px;font-size:16px;color:#151515;-webkit-text-stroke:0.2px #151515;letter-spacing:0.7px">Poinitor</div>
<div class="t" style="left:307px;width:95.5px;text-align:right;top:759.0px;font-size:16px;color:#151515;-webkit-text-stroke:0.2px #151515;">55</div>
<div class="t" style="left:405px;width:91.5px;text-align:right;top:759.0px;font-size:16px;color:#151515;-webkit-text-stroke:0.2px #151515;">989,931</div>
<div class="t" style="left:503px;width:96px;text-align:right;top:759.0px;font-size:16px;letter-spacing:-0.2px;color:#151515;-webkit-text-stroke:0.2px #151515;">888,0034</div>
<div class="a" style="left:13px;top:802.9px;width:591px;height:1px;background:#b5c8ec"></div>
<div class="t" style="left:20.4px;top:784.5px;font-size:16px;color:#151515;-webkit-text-stroke:0.2px #151515;letter-spacing:-0.35px">1 179,2028</div>
<div class="t" style="left:110.3px;top:784.5px;font-size:16px;color:#151515;-webkit-text-stroke:0.2px #151515;letter-spacing:0.55px">Worn</div>
<div class="t" style="left:212.7px;top:784.5px;font-size:16px;color:#151515;-webkit-text-stroke:0.2px #151515;letter-spacing:0.7px">Primtor</div>
<div class="t" style="left:307px;width:95.5px;text-align:right;top:784.5px;font-size:16px;color:#151515;-webkit-text-stroke:0.2px #151515;">39</div>
<div class="t" style="left:405px;width:91.5px;text-align:right;top:784.5px;font-size:16px;color:#151515;-webkit-text-stroke:0.2px #151515;">653,984</div>
<div class="t" style="left:503px;width:96px;text-align:right;top:784.5px;font-size:16px;letter-spacing:-0.2px;color:#151515;-webkit-text-stroke:0.2px #151515;">333,0024</div>
<div class="a" style="left:0px;top:803.5px;width:13px;height:25.5px;background:#e4e8f0"></div>
<div class="a" style="left:13px;top:803.5px;width:591px;height:25.5px;background:#dae5f6"></div>
<div class="a" style="left:13px;top:828.4px;width:591px;height:1px;background:#b5c8ec"></div>
<div class="t" style="left:20.4px;top:810.0px;font-size:16px;color:#151515;-webkit-text-stroke:0.2px #151515;letter-spacing:-0.35px">1.823,2024</div>
<div class="t" style="left:110.3px;top:810.0px;font-size:16px;color:#151515;-webkit-text-stroke:0.2px #151515;letter-spacing:0.55px">Eurth</div>
<div class="t" style="left:212.7px;top:810.0px;font-size:16px;color:#151515;-webkit-text-stroke:0.2px #151515;letter-spacing:0.7px">Pomtor</div>
<div class="t" style="left:307px;width:95.5px;text-align:right;top:810.0px;font-size:16px;color:#151515;-webkit-text-stroke:0.2px #151515;">36</div>
<div class="t" style="left:405px;width:91.5px;text-align:right;top:810.0px;font-size:16px;color:#151515;-webkit-text-stroke:0.2px #151515;">333,909</div>
<div class="t" style="left:503px;width:96px;text-align:right;top:810.0px;font-size:16px;letter-spacing:-0.2px;color:#151515;-webkit-text-stroke:0.2px #151515;">889,0022</div>
<div class="a" style="left:13px;top:853.9px;width:591px;height:1px;background:#b5c8ec"></div>
<div class="t" style="left:20.4px;top:835.5px;font-size:16px;color:#151515;-webkit-text-stroke:0.2px #151515;letter-spacing:-0.35px">6,077,2024</div>
<div class="t" style="left:110.3px;top:835.5px;font-size:16px;color:#151515;-webkit-text-stroke:0.2px #151515;letter-spacing:0.55px">North</div>
<div class="t" style="left:212.7px;top:835.5px;font-size:16px;color:#151515;-webkit-text-stroke:0.2px #151515;letter-spacing:0.7px">Feemtor</div>
<div class="t" style="left:307px;width:95.5px;text-align:right;top:835.5px;font-size:16px;color:#151515;-webkit-text-stroke:0.2px #151515;">31</div>
<div class="t" style="left:405px;width:91.5px;text-align:right;top:835.5px;font-size:16px;color:#151515;-webkit-text-stroke:0.2px #151515;">951,923</div>
<div class="t" style="left:503px;width:96px;text-align:right;top:835.5px;font-size:16px;letter-spacing:-0.2px;color:#151515;-webkit-text-stroke:0.2px #151515;">813,0023</div>
<div class="a" style="left:0px;top:854.5px;width:13px;height:25.5px;background:#e4e8f0"></div>
<div class="a" style="left:13px;top:854.5px;width:591px;height:25.5px;background:#dae5f6"></div>
<div class="a" style="left:13px;top:879.4px;width:591px;height:1px;background:#b5c8ec"></div>
<div class="t" style="left:20.4px;top:861.0px;font-size:16px;color:#151515;-webkit-text-stroke:0.2px #151515;letter-spacing:-0.35px">4,018,2024</div>
<div class="t" style="left:110.3px;top:861.0px;font-size:16px;color:#151515;-webkit-text-stroke:0.2px #151515;letter-spacing:0.55px">Saeel</div>
<div class="t" style="left:212.7px;top:861.0px;font-size:16px;color:#151515;-webkit-text-stroke:0.2px #151515;letter-spacing:0.7px">Monitor</div>
<div class="t" style="left:307px;width:95.5px;text-align:right;top:861.0px;font-size:16px;color:#151515;-webkit-text-stroke:0.2px #151515;">24</div>
<div class="t" style="left:405px;width:91.5px;text-align:right;top:861.0px;font-size:16px;color:#151515;-webkit-text-stroke:0.2px #151515;">813,904</div>
<div class="t" style="left:503px;width:96px;text-align:right;top:861.0px;font-size:16px;letter-spacing:-0.2px;color:#151515;-webkit-text-stroke:0.2px #151515;">849,9021</div>
<div class="t" style="left:-4px;top:402.5px;font-size:14px;color:#333">-</div>
<div class="t" style="left:-4px;top:428.0px;font-size:14px;color:#333">5</div>
<div class="t" style="left:-4px;top:479.0px;font-size:14px;color:#333">h</div>
<div class="t" style="left:-4px;top:530.0px;font-size:14px;color:#333">8</div>
<div class="t" style="left:-4px;top:581.0px;font-size:14px;color:#333">5</div>
<div class="t" style="left:-4px;top:632.0px;font-size:14px;color:#333">8</div>
<div class="t" style="left:-4px;top:657.5px;font-size:14px;color:#333">·</div>
<div class="t" style="left:-4px;top:683.0px;font-size:14px;color:#333">5</div>
<div class="t" style="left:-4px;top:734.0px;font-size:14px;color:#333">5</div>
<div class="t" style="left:-4px;top:785.0px;font-size:14px;color:#333">5</div>
<div class="t" style="left:-4px;top:836.0px;font-size:14px;color:#333">5</div>
<div class="t" style="left:-4px;top:861.5px;font-size:14px;color:#333">5</div>
<svg class="a" style="left:0px;top:330px;" width="6" height="5" viewBox="0 0 6 5"><path d="M0 1L3 4L6 1" fill="none" stroke="#444" stroke-width="1.6"/></svg>
<div class="a" style="left:13px;top:320px;width:1px;height:603px;background:#c6c6c6"></div>
<div class="a" style="left:603.6px;top:320px;width:1.3px;height:560.0px;background:#6f93dc"></div>
<div class="a" style="left:0px;top:923px;width:714px;height:22px;background:#f4f4f4;border-top:1px solid #e2e2e2"></div>
<div class="a" style="left:0px;top:942px;width:714px;height:1px;background:#e4e4e4"></div>
<div class="a" style="left:7px;top:928.4px;width:707px;height:9.5px;background:#6d6e71;border-radius:3px 0 0 3px"></div>
<svg class="a" style="left:0px;top:929px;" width="5" height="7" viewBox="0 0 5 7"><path d="M4 1L1 3.5L4 6" fill="none" stroke="#666" stroke-width="1.2"/></svg>
<div class="a" style="left:0px;top:945px;width:714px;height:33px;background:#f3f3f3;border-top:1px solid #dedede"></div>
<div class="a" style="left:88px;top:946px;width:1px;height:29px;background:#dcdcdc"></div>
<div class="t" style="left:-2px;top:954px;font-size:15px;color:#505050">Copercted</div>
<div class="t" style="left:100px;top:954px;font-size:15px;color:#505050">Gridlines and Structure&nbsp; Excel|</div>
</div>
<div class="a" style="left:759px;top:44px;width:755px;height:934px;background:#fff;box-shadow:0 5px 12px rgba(0,0,0,.08)"></div>
<div class="a" style="left:759px;top:45px;width:755px;height:50px;background:#116f38"></div>
<svg class="a" style="left:780px;top:60px;" width="21" height="20" viewBox="0 0 21 20"><path d="M1 6C1 2 4 0.5 6.5 1.5C8.5 2.3 9.5 3.5 10.5 4.5C11.5 3.5 12.5 2.3 14.5 1.5C17 0.5 20 2 20 6V17C20 19 18 20 15 19.5L10.5 18.5L6 19.5C3 20 1 19 1 17Z" fill="#2d63d0"/><path d="M1 6C1 2 4 0.5 6.5 1.5C8.5 2.3 9.5 3.5 10.5 4.5C11.5 3.5 12.5 2.3 14.5 1.5C17 0.5 20 2 20 6V8.5C17.5 8 15 8.3 13.2 9.5V19H7.8V9.5C6 8.3 3.5 8 1 8.5Z" fill="#fff"/></svg>
<div class="t" style="left:808px;top:63.5px;font-size:16px;color:#f4faf6">Copilot</div>
<svg class="a" style="left:863.0px;top:68.5px" width="8" height="5" viewBox="0 0 8 5"><path d="M0.5 0.5L4.0 4.2L7.5 0.5" fill="none" stroke="#cfe3d6" stroke-width="1.3"/></svg>
<div class="a" style="left:895px;top:59px;width:1px;height:24px;background:rgba(255,255,255,.25)"></div>
<svg class="a" style="left:1330px;top:59px;" width="20" height="19" viewBox="0 0 20 19"><rect x="1" y="1.5" width="18" height="16" fill="none" stroke="#fff" stroke-width="1.2"/><path d="M1.5 2.5C3.5 1.5 5 3 6.5 6C8 9.5 9 11 10.5 11C12 11 12.5 9 12.8 6" fill="none" stroke="#fff" stroke-width="1.7"/></svg>
<div class="a" style="left:1382px;top:67px;width:16px;height:1.6px;background:#fff"></div>
<svg class="a" style="left:1429px;top:57px;" width="19" height="20" viewBox="0 0 19 20"><path d="M3 2H17V15H13" fill="none" stroke="#fff" stroke-width="1.3"/><path d="M3 2V7" stroke="#fff" stroke-width="1.8"/><path d="M13 15C13 17 11 18 9 18H7V16" fill="none" stroke="#fff" stroke-width="1.2"/></svg>
<svg class="a" style="left:1479px;top:58px;" width="16" height="15" viewBox="0 0 16 15"><path d="M1 1L15 14M15 1L1 14" stroke="#fff" stroke-width="1.6"/></svg>
<div class="a" style="left:759px;top:95px;width:222px;height:39px;background:#f2f2f2;border-bottom:1px solid #e2e2e2"></div>
<div class="a" style="left:801px;top:102px;width:121px;height:30px;background:#e6f2ea;border-radius:6px"></div>
<div class="a" style="left:769px;top:96px;width:211px;height:1.5px;background:#b9d8c3"></div>
<svg class="a" style="left:808px;top:108px;" width="18" height="18" viewBox="0 0 18 18"><rect x="0.8" y="3.5" width="13" height="13.5" fill="none" stroke="#2e8a50" stroke-width="1.4"/><path d="M3.5 10L7 13L15 2" fill="none" stroke="#2e8a50" stroke-width="1.6"/></svg>
<div class="t" style="left:832px;top:110.5px;font-size:16px;color:#23803f;letter-spacing:0.35px;-webkit-text-stroke:0.25px #23803f">Summarch</div>
<svg class="a" style="left:947px;top:111px;" width="14" height="14" viewBox="0 0 14 14"><path d="M7 0V14M0 7H14" stroke="#2e8a50" stroke-width="1.5"/></svg>
<div class="a" style="left:759px;top:134px;width:222px;height:116px;background:#fff;border-bottom:1px solid #d9d9d9;border-right:1px solid #e6e6e6"></div>
<div class="a" style="left:759px;top:147px;width:2px;height:63px;background:#4aa56c"></div>
<div class="a" style="left:767px;top:147px;width:1px;height:102px;background:#e6e6e6"></div>
<div class="a" style="left:768px;top:148px;width:107px;height:29px;border:1px solid #dcdcdc;border-radius:4px;background:#fff"></div>
<div class="t" style="left:772px;top:155px;font-size:15.5px;color:#333">Suatue</div>
<div class="a" style="left:772px;top:174px;width:10px;height:1.2px;background:#444"></div>
<svg class="a" style="left:862.5px;top:158.0px" width="7" height="4" viewBox="0 0 7 4"><path d="M0 0H7L3.5 4Z" fill="#999"/></svg>
<svg class="a" style="left:889px;top:152px;" width="21" height="22" viewBox="0 0 21 22"><circle cx="8.5" cy="8.5" r="7.3" fill="none" stroke="#333" stroke-width="1.6"/><path d="M13.5 14L19 20" stroke="#3b6fd0" stroke-width="2"/></svg>
<div class="a" style="left:932px;top:146px;width:1px;height:104px;background:#e6e6e6"></div>
<svg class="a" style="left:946px;top:153px;" width="16" height="18" viewBox="0 0 16 18"><path d="M8 1C4 1 1.5 3.5 1.5 7C1.5 9.5 3.5 11 5 13H11C12.5 11 14.5 9.5 14.5 7C14.5 3.5 12 1 8 1Z" fill="none" stroke="#333" stroke-width="1.5"/><path d="M5 15.5H11" stroke="#333" stroke-width="1.5"/><path d="M5 2.5C3 3.5 2.5 5 2.5 7" stroke="#3b6fd0" stroke-width="1.3" fill="none"/></svg>
<div class="a" style="left:973px;top:160px;width:6px;height:1px;background:#aaa"></div>
<div class="a" style="left:777px;top:186px;width:1px;height:27px;background:#eee"></div>
<div class="a" style="left:781px;top:185px;width:26px;height:28px;background:#e4e4e4;border-radius:2px"></div>
<svg class="a" style="left:785px;top:190px;" width="18" height="18" viewBox="0 0 18 18"><path d="M1 2H17M1 5.5H17M1 9H17M1 12.5H17M1 16H17" stroke="#444" stroke-width="1.5"/></svg>
<svg class="a" style="left:816.0px;top:198.0px" width="7" height="4" viewBox="0 0 7 4"><path d="M0 0H7L3.5 4Z" fill="#aaa"/></svg>
<div class="a" style="left:831px;top:186px;width:1px;height:27px;background:#eee"></div>
<div class="a" style="left:837px;top:185px;width:89px;height:28px;border:1px solid #e4e4e4;border-radius:4px;background:#fff"></div>
<div class="t" style="left:843px;top:193px;font-size:14.5px;color:#333">Sum chee</div>
<svg class="a" style="left:915.0px;top:198.0px" width="7" height="4" viewBox="0 0 7 4"><path d="M0 0H7L3.5 4Z" fill="#999"/></svg>
<div class="a" style="left:940px;top:185px;width:45px;height:28px;border:1px solid #e4e4e4;border-radius:4px;background:#fff"></div>
<div class="t" style="left:945px;top:192px;font-size:15.5px;color:#333">26</div>
<svg class="a" style="left:970.0px;top:198.0px" width="7" height="4" viewBox="0 0 7 4"><path d="M0 0H7L3.5 4Z" fill="#aaa"/></svg>
<div class="t" style="left:839px;top:234px;font-size:12.5px;color:#444">Tatt</div>
<svg class="a" style="left:914px;top:234px;" width="12" height="11" viewBox="0 0 12 11"><rect x="0.5" y="0.5" width="11" height="10" fill="#ccc" stroke="#bbb"/><path d="M3 3L8 8" stroke="#fff" stroke-width="1.5"/></svg>
<div class="t" style="left:945px;top:234px;font-size:12.5px;color:#444">Mʁt</div>
<div class="a" style="left:759px;top:250px;width:222px;height:12px;background:#f2f2f2"></div>
<div class="a" style="left:759px;top:255px;width:222px;height:1px;background:#dedede"></div>
<div class="a" style="left:759px;top:261px;width:222px;height:28px;background:#fff;border-top:1px solid #dcdcdc;border-bottom:1px solid #dcdcdc"></div>
<div class="a" style="left:759px;top:289px;width:201px;height:30px;background:#efefef;border-bottom:1px solid #cfcfcf"></div>
<div class="a" style="left:781px;top:293px;width:1px;height:26px;background:#d6d6d6"></div>
<div class="a" style="left:857px;top:293px;width:1px;height:26px;background:#d6d6d6"></div>
<div class="a" style="left:938px;top:293px;width:1px;height:26px;background:#d6d6d6"></div>
<div class="t" style="left:815px;top:300px;font-size:14px;color:#555">1</div>
<div class="t" style="left:893px;top:300px;font-size:14px;color:#555">2</div>
<div class="a" style="left:759px;top:319px;width:201px;height:604px;background:#fff"></div>
<div class="a" style="left:759px;top:344.0px;width:201px;height:1px;background:#e3e3e3"></div>
<div class="a" style="left:759px;top:369.5px;width:201px;height:1px;background:#e3e3e3"></div>
<div class="a" style="left:759px;top:395.0px;width:201px;height:1px;background:#e3e3e3"></div>
<div class="a" style="left:759px;top:420.5px;width:201px;height:1px;background:#e3e3e3"></div>
<div class="a" style="left:759px;top:446.0px;width:201px;height:1px;background:#e3e3e3"></div>
<div class="a" style="left:759px;top:471.5px;width:201px;height:1px;background:#e3e3e3"></div>
<div class="a" style="left:759px;top:497.0px;width:201px;height:1px;background:#e3e3e3"></div>
<div class="a" style="left:759px;top:522.5px;width:201px;height:1px;background:#e3e3e3"></div>
<div class="a" style="left:759px;top:548.0px;width:201px;height:1px;background:#e3e3e3"></div>
<div class="a" style="left:759px;top:573.5px;width:201px;height:1px;background:#e3e3e3"></div>
<div class="a" style="left:759px;top:599.0px;width:201px;height:1px;background:#e3e3e3"></div>
<div class="a" style="left:759px;top:624.5px;width:201px;height:1px;background:#e3e3e3"></div>
<div class="a" style="left:759px;top:650.0px;width:201px;height:1px;background:#e3e3e3"></div>
<div class="a" style="left:759px;top:675.5px;width:201px;height:1px;background:#e3e3e3"></div>
<div class="a" style="left:759px;top:701.0px;width:201px;height:1px;background:#e3e3e3"></div>
<div class="a" style="left:759px;top:726.5px;width:201px;height:1px;background:#e3e3e3"></div>
<div class="a" style="left:759px;top:752.0px;width:201px;height:1px;background:#e3e3e3"></div>
<div class="a" style="left:759px;top:777.5px;width:201px;height:1px;background:#e3e3e3"></div>
<div class="a" style="left:759px;top:803.0px;width:201px;height:1px;background:#e3e3e3"></div>
<div class="a" style="left:759px;top:828.5px;width:201px;height:1px;background:#e3e3e3"></div>
<div class="a" style="left:759px;top:854.0px;width:201px;height:1px;background:#e3e3e3"></div>
<div class="a" style="left:759px;top:879.5px;width:201px;height:1px;background:#e3e3e3"></div>
<div class="a" style="left:759px;top:905.0px;width:201px;height:1px;background:#e3e3e3"></div>
<div class="a" style="left:781px;top:319px;width:1px;height:602px;background:#e3e3e3"></div>
<div class="a" style="left:857px;top:319px;width:1px;height:602px;background:#e3e3e3"></div>
<div class="a" style="left:938px;top:319px;width:1px;height:602px;background:#e3e3e3"></div>
<div class="a" style="left:960px;top:289px;width:21px;height:634px;background:#f1f1f1;border-left:1px solid #e2e2e2;border-right:1px solid #e6e6e6"></div>
<svg class="a" style="left:965px;top:297px;" width="11" height="8" viewBox="0 0 11 8"><path d="M0 8L5.5 0L11 8Z" fill="#555"/></svg>
<div class="a" style="left:965px;top:312px;width:11px;height:572px;background:#6d6e71;border-radius:2px"></div>
<svg class="a" style="left:966px;top:909px;" width="9" height="7" viewBox="0 0 9 7"><path d="M0 0L4.5 7L9 0Z" fill="#555"/></svg>
<div class="a" style="left:759px;top:923px;width:222px;height:20px;background:#f5f5f5;border-top:1px solid #e4e4e4"></div>
<div class="a" style="left:759px;top:928.8px;width:178px;height:9px;background:#6d6e71;border-radius:0 3px 3px 0"></div>
<svg class="a" style="left:944px;top:930px;" width="5" height="7" viewBox="0 0 5 7"><path d="M0 0L5 3.5L0 7Z" fill="#444"/></svg>
<div class="a" style="left:958px;top:923px;width:23px;height:20px;background:#e4e4e4"></div>
<div class="a" style="left:759px;top:943px;width:222px;height:2px;background:#e8e8e8"></div>
<div class="a" style="left:759px;top:945px;width:222px;height:33px;background:#f3f3f3;border-top:1px solid #dedede"></div>
<div class="a" style="left:980px;top:95px;width:534px;height:883px;background:#f5f5f5;border-left:1px solid #e2e2e2"></div>
<div class="t" style="left:1005px;top:117.5px;font-size:20px;color:#3a3a3a;font-weight:bold;letter-spacing:-0.45px">Copilot</div>
<svg class="a" style="left:1345px;top:117px;" width="21" height="20" viewBox="0 0 21 20"><circle cx="10.5" cy="10" r="9" fill="none" stroke="#444" stroke-width="1.5"/><circle cx="10.5" cy="5.8" r="1.2" fill="#444"/><path d="M10.5 8.5V15" stroke="#444" stroke-width="1.8"/></svg>
<div class="a" style="left:1390px;top:108px;width:1px;height:38px;background:#dedede"></div>
<div class="t" style="left:1411px;top:118px;font-size:17px;color:#333">A: 0</div>
<div class="a" style="left:1459px;top:108px;width:1px;height:38px;background:#dedede"></div>
<svg class="a" style="left:1479px;top:119px;" width="15" height="14" viewBox="0 0 15 14"><path d="M1 1L14 13M14 1L1 13" stroke="#444" stroke-width="1.5"/></svg>
<div class="a" style="left:1001px;top:158px;width:500px;height:61px;background:#fafafa;border:1px solid #e1e1e1;border-radius:4px"></div>
<div class="t" style="left:1017px;top:181px;font-size:19.5px;color:#474747">Summarize revenue by region</div>
<div class="a" style="left:1463.8px;top:186px;width:4.4px;height:4.4px;background:#333;border-radius:50%"></div>
<div class="a" style="left:1470.8px;top:186px;width:4.4px;height:4.4px;background:#333;border-radius:50%"></div>
<div class="a" style="left:1477.8px;top:186px;width:4.4px;height:4.4px;background:#333;border-radius:50%"></div>
<div class="a" style="left:1002px;top:235px;width:499px;height:85px;background:#4059aa;border-radius:3px"></div>
<div class="a" style="left:1015px;top:248px;width:474px;height:59px;background:#d9e2f3;border-radius:3px"></div>
<div class="t" style="left:1049px;top:270px;font-size:20.1px;color:#333">I've summarized the revenue for each region.</div>
<div class="a" style="left:1001px;top:335px;width:500px;height:567px;background:#f8f8f8;border:1px solid #e6e6e6;border-radius:5px"></div>
<div class="t" style="left:1018px;top:358px;font-size:18.3px;color:#1f1f1f;-webkit-text-stroke:0.35px #1f1f1f">Revenue by Region</div>
<div class="a" style="left:1072px;top:401px;width:397px;height:170px;background:#fff;border:1px solid #e2e2e2"></div>
<div class="a" style="left:1072px;top:444.6px;width:397px;height:1px;background:#e3e3e3"></div>
<div class="a" style="left:1072px;top:486px;width:397px;height:1px;background:#e3e3e3"></div>
<div class="a" style="left:1072px;top:527.2px;width:397px;height:1px;background:#e3e3e3"></div>
<div class="t" style="left:1000px;width:64px;text-align:right;top:394.2px;font-size:16.5px;color:#333">60000</div>
<div class="t" style="left:1000px;width:64px;text-align:right;top:435.5px;font-size:16.5px;color:#333">50000</div>
<div class="t" style="left:1000px;width:64px;text-align:right;top:477.1px;font-size:16.5px;color:#333">40000</div>
<div class="t" style="left:1000px;width:64px;text-align:right;top:518.4px;font-size:16.5px;color:#333">10000</div>
<div class="t" style="left:1000px;width:64px;text-align:right;top:561.4px;font-size:16.5px;color:#333">0</div>
<div class="a" style="left:1103.4px;top:477.4px;width:52.6px;height:93.1px;background:#5f7bc7"></div>
<div class="a" style="left:1198.0px;top:470.0px;width:52.0px;height:100.5px;background:#5f7bc7"></div>
<div class="a" style="left:1292.3px;top:473.0px;width:52.7px;height:97.5px;background:#5f7bc7"></div>
<div class="a" style="left:1385.4px;top:442.0px;width:53.6px;height:128.5px;background:#5f7bc7"></div>
<div class="t" style="left:1089.5px;width:80px;text-align:center;top:585px;font-size:14px;color:#444">North</div>
<div class="t" style="left:1184px;width:80px;text-align:center;top:585px;font-size:14px;color:#444">South</div>
<div class="t" style="left:1279px;width:80px;text-align:center;top:585px;font-size:14px;color:#444">Entes</div>
<div class="t" style="left:1371px;width:80px;text-align:center;top:585px;font-size:14px;color:#444">West</div>
<div class="a" style="left:1017px;top:636px;width:467px;height:246px;background:#fff;border:1px solid #d9d9d9;border-radius:5px 5px 0 0"></div>
<div class="a" style="left:1017px;top:636px;width:125px;height:83px;background:#3a54a6;border-radius:5px 0 0 0"></div>
<div class="a" style="left:1142px;top:636px;width:342px;height:41px;background:#5069b9;border-radius:0 5px 0 0"></div>
<div class="a" style="left:1142px;top:677px;width:342px;height:42px;background:#5f7bcb"></div>
<div class="a" style="left:1018px;top:719px;width:124px;height:124px;background:#f7f7f7"></div>
<div class="a" style="left:1018px;top:843px;width:465px;height:38px;background:#f5f5f5"></div>
<div class="a" style="left:1268px;top:677px;width:1px;height:42px;background:#4b63b0"></div>
<div class="a" style="left:1268px;top:719px;width:1px;height:163px;background:#dcdcdc"></div>
<div class="a" style="left:1388px;top:677px;width:1px;height:42px;background:#4b63b0"></div>
<div class="a" style="left:1388px;top:719px;width:1px;height:163px;background:#dcdcdc"></div>
<div class="a" style="left:1142px;top:719px;width:1px;height:163px;background:#dcdcdc"></div>
<div class="a" style="left:1017px;top:758.5px;width:467px;height:1px;background:#dcdcdc"></div>
<div class="a" style="left:1017px;top:799.6px;width:467px;height:1px;background:#dcdcdc"></div>
<div class="a" style="left:1017px;top:843px;width:467px;height:1px;background:#dcdcdc"></div>
<div class="t" style="left:1031px;top:648px;font-size:17px;color:#fff;font-weight:bold;letter-spacing:-0.1px">Repctable</div>
<div class="t" style="left:1159px;top:648px;font-size:17.3px;color:#fff;font-weight:bold">Region and Product</div>
<div class="t" style="left:1154px;top:689px;font-size:18px;color:#fff;letter-spacing:0.6px;-webkit-text-stroke:0.3px #fff">Laptop</div>
<div class="t" style="left:1280px;top:689px;font-size:18px;color:#fff;letter-spacing:0.6px;-webkit-text-stroke:0.3px #fff">Printer</div>
<div class="t" style="left:1399px;top:689px;font-size:18px;color:#fff;letter-spacing:0.6px;-webkit-text-stroke:0.3px #fff">Monitor</div>
<div class="t" style="left:1032px;top:729.5px;font-size:18px;color:#333">North</div>
<div class="t" style="left:1162px;top:729.5px;font-size:17.5px;color:#444;letter-spacing:0.1px">683,600</div>
<div class="t" style="left:1289px;top:729.5px;font-size:17.5px;color:#444;letter-spacing:0.1px">800,600</div>
<div class="t" style="left:1407.7px;top:729.5px;font-size:17.5px;color:#444;letter-spacing:0.1px">697,660</div>
<div class="t" style="left:1032px;top:770.0px;font-size:18px;color:#333">South</div>
<div class="t" style="left:1162px;top:770.0px;font-size:17.5px;color:#444;letter-spacing:0.1px">237,200</div>
<div class="t" style="left:1289px;top:770.0px;font-size:17.5px;color:#444;letter-spacing:0.1px">334,631</div>
<div class="t" style="left:1407.7px;top:770.0px;font-size:17.5px;color:#444;letter-spacing:0.1px">742,630</div>
<div class="t" style="left:1032px;top:812.0px;font-size:18px;color:#333">East</div>
<div class="t" style="left:1162px;top:812.0px;font-size:17.5px;color:#444;letter-spacing:0.1px">607,650</div>
<div class="t" style="left:1289px;top:812.0px;font-size:17.5px;color:#444;letter-spacing:0.1px">323,140</div>
<div class="t" style="left:1407.7px;top:812.0px;font-size:17.5px;color:#444;letter-spacing:0.1px">613,650</div>
<div class="t" style="left:1029px;top:855px;font-size:18.5px;color:#222;letter-spacing:0.2px">Grand Total</div>
<div class="t" style="left:1152px;top:855px;font-size:18px;color:#1a1a1a;-webkit-text-stroke:0.35px #1a1a1a;letter-spacing:0.4px">$1,48,600</div>
<div class="t" style="left:1280px;top:855px;font-size:18px;color:#1a1a1a;-webkit-text-stroke:0.35px #1a1a1a;letter-spacing:0.4px">$148,700</div>
<div class="t" style="left:1399px;top:855px;font-size:18px;color:#1a1a1a;-webkit-text-stroke:0.35px #1a1a1a;letter-spacing:0.4px">1148,600</div>
<div class="a" style="left:1004px;top:916.5px;width:204px;height:48px;background:#6079c9;border:1px solid #4b64b3;border-radius:4px"></div>
<svg class="a" style="left:1050px;top:933px;" width="17" height="17" viewBox="0 0 17 17"><path d="M1 6C3 4 6 4.5 8 6L11 2.5C13 1 15.5 1.5 15.5 4V9H3Z" fill="#fff"/><path d="M3 11H15M3 15H15M9 9V15" stroke="#fff" stroke-width="1.8"/></svg>
<div class="t" style="left:1091px;top:933px;font-size:18.5px;color:#fff;font-weight:bold">Send</div>
<svg class="a" style="left:1184.0px;top:938.0px" width="11" height="6" viewBox="0 0 11 6"><path d="M0.5 0.5L5.5 5.2L10.5 0.5" fill="none" stroke="#fff" stroke-width="1.6"/></svg>
<div class="a" style="left:1222.7px;top:916.5px;width:280px;height:48px;background:#e6e6e6;border:1px solid #dddddd;border-radius:4px"></div>
<div class="a" style="left:1451.5px;top:918px;width:1.5px;height:45px;background:#c6c6c6"></div>
<svg class="a" style="left:1296px;top:930px;" width="23" height="21" viewBox="0 0 23 21"><path d="M2 19L4.5 10L11 2.5H21V9L14.5 19Z" fill="none" stroke="#333" stroke-width="1.7" stroke-linejoin="round"/><path d="M9 13L11 15L16 7" fill="none" stroke="#333" stroke-width="1.6"/></svg>
<div class="t" style="left:1337px;top:933px;font-size:18.5px;color:#222;font-weight:bold">Sparkle</div>
<svg class="a" style="left:1473px;top:933px;" width="11" height="17" viewBox="0 0 11 17"><path d="M1.5 1.5L9 8.5L1.5 15.5" fill="none" stroke="#333" stroke-width="1.8"/></svg>
</div></body></html>
